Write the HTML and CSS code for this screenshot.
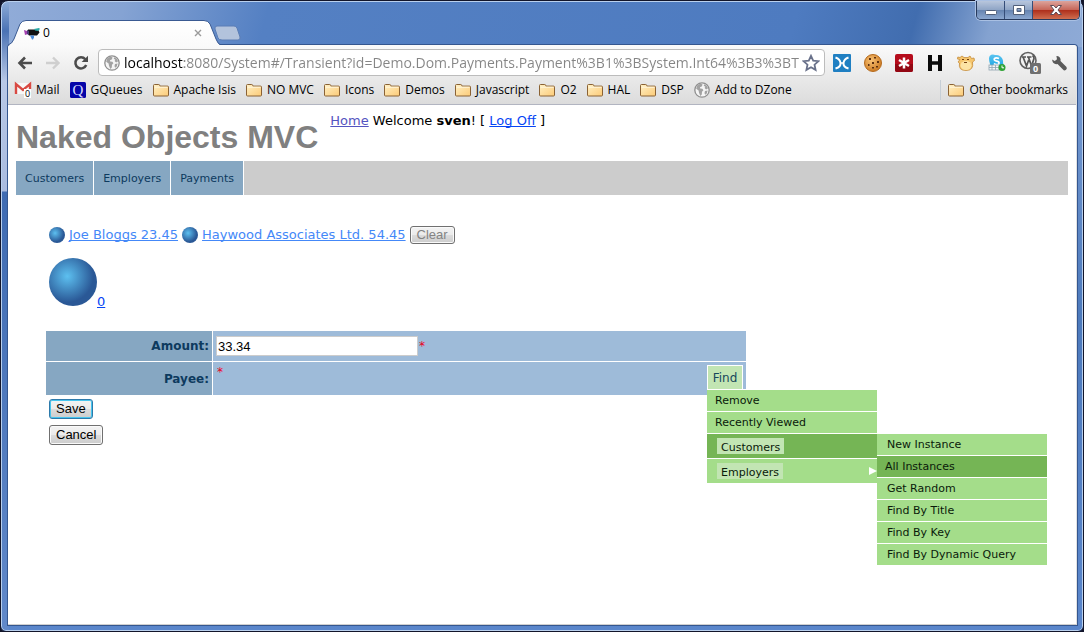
FILE: index.html
```html
<!DOCTYPE html>
<html lang="en">
<head>
<meta charset="utf-8">
<title>Naked Objects MVC</title>
<link rel="stylesheet" href="styles.css">
</head>
<body>
<svg class="defs" aria-hidden="true">
  <defs>
    <linearGradient id="folder-fill" x1="0" y1="0" x2="1" y2="1"><stop offset="0" stop-color="#fff0c4"/><stop offset="1" stop-color="#fccb78"/></linearGradient>
    <linearGradient id="tab-fill" x1="0" y1="0" x2="0" y2="1"><stop offset="0" stop-color="#ffffff"/><stop offset="1" stop-color="#fafafa"/></linearGradient>
    <linearGradient id="sky" x1="0" y1="0" x2="0" y2="1"><stop offset="0" stop-color="#5cc4f0"/><stop offset="1" stop-color="#0d9ee0"/></linearGradient>
    <radialGradient id="cookie" cx=".4" cy=".35" r=".7"><stop offset="0" stop-color="#f9c274"/><stop offset="1" stop-color="#c9771f"/></radialGradient>
    <symbol id="folder" viewBox="0 0 16 16">
      <path d="M.5 13V3.500q0-1 1-1h4.200q.8 0 1 .8l.2.8h7.600q1 0 1 1V13q0 1-1 1h-13q-1 0-1-1z" fill="url(#folder-fill)" stroke="#8a6234"/>
      <path d="M1.500 5.200h13" stroke="#fff7df"/>
    </symbol>
    <symbol id="globe" viewBox="0 0 16 16">
      <circle cx="8" cy="8" r="7.200" fill="#f5f5f5" stroke="#8f8f8f" stroke-width="1.300"/>
      <path d="M3 3.500l3-1.800 2.500.6-.5 1.900-2 1 .2 1.300 2.200.2 1 1.600-1.400 1.500-.2 2.700-1.500 1.400-1.300-3.200-.4-2.300-2.400-1.700zM10 2.200l2.600 1.400 1.500 2.600-2 1.200-1.500-1.400.7-1.300-1.500-.9zM11 9l2.600-.4-.8 2.800-1.700 1.300-.6-1.600z" fill="#a2a2a2"/>
    </symbol>
  </defs>
</svg>

<div class="window">
  <header class="titlebar">
    <div class="tabs">
      <div class="tab">
        <svg class="tab-shape" viewBox="0 0 212 25" aria-hidden="true"><path d="M0 25Q4 24 6 19L12 4Q14 .5 18 .5H196Q200 .5 202 4L208 19Q210 24 212 25z" fill="url(#tab-fill)"/><path d="M0 25Q4 24 6 19L12 4Q14 .5 18 .5H196Q200 .5 202 4L208 19Q210 24 212 24.500" fill="none" stroke="#3a5a92"/></svg>
        <svg class="icon" viewBox="0 0 16 16" aria-hidden="true"><path d="M4 4.500h10l1.500 3-2.500 3H5L3 8z" fill="#111"/><path d="M0 5l3 1 1 3-3 1z" fill="#a23fae"/><path d="M3 5l2 1v4l-2-1z" fill="#4b3a78"/><path d="M10 4l5-1 1 1-2 2-3-.5z" fill="#28a7a4"/><path d="M6 10.500h4v2l-1 2H8l-1-2z" fill="#4b8bd8"/></svg>
        <span class="tab-title">0</span>
        <button class="plain" type="button" aria-label="Close tab"><svg class="tab-x" viewBox="0 0 8 8"><path d="M1 1l6 6M7 1L1 7" stroke="#9a9a9a" stroke-width="1.400"/></svg></button>
      </div>
      <button class="plain" type="button" aria-label="New tab"><svg class="new-tab" viewBox="0 0 27 16"><path d="M3 1h17q2 0 3 2l3 9q.6 3-2 3H8q-3 0-4-2L1 4Q.4 1 3 1z" fill="#b3c3dc" stroke="#5b7db5"/></svg></button>
    </div>
    <div class="controls">
      <button class="control" type="button" aria-label="Minimize"><svg viewBox="0 0 12 10"><rect x=".5" y="5.500" width="11" height="4" rx="1" fill="#fff" stroke="#52607a"/></svg></button>
      <button class="control" type="button" aria-label="Maximize"><svg viewBox="0 0 12 10"><path d="M.5.5h11v9H.5zM4 3.500v3h4v-3z" fill="#fff" fill-rule="evenodd" stroke="#52607a"/></svg></button>
      <button class="control close" type="button" aria-label="Close"><svg viewBox="0 0 12 10"><path d="M.5.5h3.300L6 3 8.200.5h3.300L8 5l3.500 4.500H8.200L6 7 3.800 9.500H.5L4 5z" fill="#fff" stroke="#5c4a55"/></svg></button>
    </div>
  </header>

  <div class="client">
    <div class="chrome">
      <div class="toolbar">
        <div class="nav">
          <button class="plain" type="button" aria-label="Back"><svg class="icon" viewBox="0 0 16 16"><path d="M15 8H3M8 2.500L2.500 8 8 13.500" fill="none" stroke="#4c4c4c" stroke-width="2.600"/></svg></button>
          <button class="plain" type="button" aria-label="Forward"><svg class="icon" viewBox="0 0 16 16"><path d="M1 8h12M8 2.500L13.500 8 8 13.500" fill="none" stroke="#cfcfcf" stroke-width="2.400"/></svg></button>
          <button class="plain" type="button" aria-label="Reload"><svg class="icon" viewBox="0 0 16 16"><path d="M12.300 4.200A5.600 5.600 0 1 0 13.200 10" fill="none" stroke="#4c4c4c" stroke-width="2.500"/><path d="M15 .8V7H8.600z" fill="#4c4c4c"/></svg></button>
        </div>
        <div class="omnibox">
          <svg class="icon" aria-hidden="true"><use href="#globe"/></svg>
          <input class="url" type="text" aria-label="Address" value="localhost:8080/System#/Transient?id=Demo.Dom.Payments.Payment%3B1%3BSystem.Int64%3B3%3BTransient">
          <button class="plain" type="button" aria-label="Bookmark this page"><svg class="star" viewBox="0 0 18 18"><path d="M9 1.800l2.200 4.800 5.200.6-3.900 3.500 1.100 5.200L9 13.300l-4.600 2.600 1.100-5.200L1.600 7.200l5.200-.6z" fill="#fff" stroke="#69718a" stroke-width="1.800"/></svg></button>
        </div>
        <div class="extensions">
          <button class="plain" type="button" aria-label="Xmarks"><svg class="ext" viewBox="0 0 18 18"><rect width="18" height="18" rx="1" fill="#1f7fc2"/><path d="M2.500 3.500Q7 5 7.500 9T2.500 14.500M15.500 3.500Q11 5 10.500 9t5 5.500" fill="none" stroke="#fff" stroke-width="2"/><path d="M7 9h4" stroke="#fff" stroke-width="1.500"/></svg></button>
          <button class="plain" type="button" aria-label="Cookies"><svg class="ext" viewBox="0 0 18 18"><circle cx="9" cy="9" r="8.500" fill="url(#cookie)" stroke="#b56a1d"/><path d="M5 4h2v2H5zM10 3h2v1.500h-2zM13 7h2v2h-2zM8 8h2v2H8zM4 10h1.500v2H4zM8 13h2v1.500H8zM12 12h2v1.500h-2z" fill="#5d3010"/></svg></button>
          <button class="plain" type="button" aria-label="LastPass"><svg class="ext" viewBox="0 0 18 18"><rect width="18" height="18" rx="2" fill="#b50c1c"/><path d="M0 10h18v6q0 2-2 2H2q-2 0-2-2z" fill="#930713"/><path d="M9 3.500v11M4 6l10 6M14 6L4 12" stroke="#fff" stroke-width="2.500"/></svg></button>
          <button class="plain" type="button" aria-label="H"><svg class="ext" viewBox="0 0 18 18"><path d="M2 1h4v6.200h6V1h4v16h-4v-6.200H6V17H2z" fill="#0b0b0b"/></svg></button>
          <button class="plain" type="button" aria-label="Hamster"><svg class="ext" viewBox="0 0 18 18"><path d="M3 5.500L.5 5l.3-2L3 3.500 5 2l2 1.500h4L13 2l1.500 2.500 2.500-.5.500 2.500L15.500 8q1.500 8.500-6.500 8.500T2.500 9L1 8z" fill="#f5c56d" stroke="#c58d3b" stroke-width=".8"/><ellipse cx="9" cy="11.500" rx="5.500" ry="4.500" fill="#fce3a4"/><path d="M5 5h2v1H5zM10 5h2v1h-2zM7 8h3v1H7z" fill="#74410f"/></svg></button>
          <button class="plain" type="button" aria-label="Skype"><svg class="ext" viewBox="0 0 18 18"><path d="M1 4a4 4 0 0 1 6-3 7 7 0 0 1 8 8q1 2 0 4l-3 3H8Q3 16 2 10 1 7 1 4z" fill="url(#sky)"/><path d="M11 4.500Q8 3 6.400 4.600q-.8 2 2.400 2.500 3 .7 2 2.700Q9 11.500 5.800 9.800" fill="none" stroke="#fff" stroke-width="1.700"/><rect x="1" y="11" width="10" height="5" fill="#f3f6f8" stroke="#8fa4b0" stroke-width=".8"/><path d="M4 11v5M7.500 11v5M1 13.500h10" stroke="#8fa4b0" stroke-width=".8"/><circle cx="14" cy="13.500" r="3.500" fill="#2fa336"/><path d="M14 11.500v2.300h2" fill="none" stroke="#fff"/></svg></button>
          <button class="plain" type="button" aria-label="WordPress"><svg class="wordpress" viewBox="0 0 22 23"><circle cx="9" cy="9.500" r="8" fill="#f2f2f2" stroke="#616161" stroke-width="1.600"/><path d="M3 6h4M8 6h4.500M4.200 6.300L7.500 15l2.200-6M9.500 6.300l3 8.700L15 7.500q0-2-1.500-3" fill="none" stroke="#555" stroke-width="1.700"/><rect x="11" y="12" width="11" height="11" rx="1.500" fill="#707070"/><text x="16.500" y="21" class="badge-light">0</text></svg></button>
          <button class="plain" type="button" aria-label="Settings"><svg class="icon" viewBox="0 0 16 16"><path d="M1 4.500L3.800 6 6 4.200 5.400 1Q9 .8 9.600 4.600L9.500 6l6 6q1 2-.7 3t-2.600-.3L6.500 9Q2 10 1 4.500z" fill="#5b5b5b"/></svg></button>
        </div>
      </div>
      <nav class="bookmarks" aria-label="Bookmarks">
        <a class="bookmark" href="#"><svg class="icon" viewBox="0 0 16 16"><path d="M0 1h16v11H0z" fill="#f8f8f8"/><path d="M1 12V2l7 6 7-6v5" fill="none" stroke="#d94a43" stroke-width="2.400"/><rect x="9" y="7" width="7" height="9" fill="#fff"/><text x="12.500" y="15" class="badge-dark">0</text></svg>Mail</a>
        <a class="bookmark" href="#"><svg class="icon" viewBox="0 0 16 16"><rect width="16" height="16" rx="1.500" fill="#0505a8"/><text x="8" y="13" class="q-mark">Q</text></svg>GQueues</a>
        <a class="bookmark" href="#"><svg class="icon"><use href="#folder"/></svg>Apache Isis</a>
        <a class="bookmark" href="#"><svg class="icon"><use href="#folder"/></svg>NO MVC</a>
        <a class="bookmark" href="#"><svg class="icon"><use href="#folder"/></svg>Icons</a>
        <a class="bookmark" href="#"><svg class="icon"><use href="#folder"/></svg>Demos</a>
        <a class="bookmark" href="#"><svg class="icon"><use href="#folder"/></svg>Javascript</a>
        <a class="bookmark" href="#"><svg class="icon"><use href="#folder"/></svg>O2</a>
        <a class="bookmark" href="#"><svg class="icon"><use href="#folder"/></svg>HAL</a>
        <a class="bookmark" href="#"><svg class="icon"><use href="#folder"/></svg>DSP</a>
        <a class="bookmark" href="#"><svg class="icon"><use href="#globe"/></svg>Add to DZone</a>
        <a class="bookmark other" href="#"><svg class="icon"><use href="#folder"/></svg>Other bookmarks</a>
      </nav>
    </div>

    <main class="page">
      <div class="masthead">
        <h1 class="brand">Naked Objects MVC</h1>
        <p class="login"><a class="visited" href="#">Home</a> Welcome <b>sven</b>! [ <a href="#">Log Off</a> ]</p>
      </div>
      <nav class="services" aria-label="Services">
        <button class="service" type="button">Customers</button>
        <button class="service" type="button">Employers</button>
        <button class="service" type="button">Payments</button>
      </nav>

      <div class="history">
        <span class="ball"></span><a href="#">Joe Bloggs 23.45</a>
        <span class="ball"></span><a href="#">Haywood Associates Ltd. 54.45</a>
        <button class="push faded" type="button">Clear</button>
      </div>
      <div class="object"><span class="ball large"></span><a href="#">0</a></div>

      <form class="edit">
        <div class="properties">
          <div class="property">
            <label class="name" for="amount">Amount:</label>
            <div class="value"><input class="field" id="amount" type="text" value="33.34"><span class="required">*</span></div>
          </div>
          <div class="property">
            <span class="name">Payee:</span>
            <div class="value payee"><span class="required">*</span>
              <div class="finder">
                <button class="find" type="button">Find</button>
                <div class="menu">
                  <button class="item" type="button">Remove</button>
                  <button class="item" type="button">Recently Viewed</button>
                  <div class="parent">
                    <button class="item tall active" type="button"><span class="chip">Customers</span></button>
                    <div class="menu submenu">
                      <button class="item" type="button">New Instance</button>
                      <button class="item active" type="button">All Instances</button>
                      <button class="item" type="button">Get Random</button>
                      <button class="item" type="button">Find By Title</button>
                      <button class="item" type="button">Find By Key</button>
                      <button class="item" type="button">Find By Dynamic Query</button>
                    </div>
                  </div>
                  <button class="item tall" type="button"><span class="chip">Employers</span><svg class="arrow" viewBox="0 0 8 8"><path d="M0 0l8 4-8 4z" fill="#fff"/></svg></button>
                </div>
              </div>
            </div>
          </div>
        </div>
        <div class="actions">
          <button class="push default" type="button">Save</button>
          <button class="push" type="button">Cancel</button>
        </div>
      </form>
    </main>
  </div>
</div>
</body>
</html>
```
FILE: styles.css
```css
* { box-sizing: border-box; }

body {
  margin: 0;
  background: #12152a;
  font: 13px/16px "DejaVu Sans", Verdana, sans-serif;
  color: #000;
}

button { font: inherit; color: inherit; cursor: pointer; }
a { color: #0645f5; text-decoration-skip-ink: none; }
svg { display: block; flex: none; }

.defs { position: absolute; width: 0; height: 0; }
.plain { display: block; padding: 0; border: 0; background: none; }
.icon { width: 16px; height: 16px; overflow: visible; }

/* Window frame */
.window {
  display: flex;
  flex-direction: column;
  min-height: 100vh;
  padding: 0 5px 6px;
  border: 1px solid #12152a;
  border-radius: 8px 8px 6px 6px;
  box-shadow: inset 0 0 0 1px #b9d0ee;
  background:
    linear-gradient(#8fadd9, #4a72b4 30px, #b8c8e6 80px, #a9bbdf 190px, #3f6bb2 191px, #6189ca) left / 8px 100% no-repeat,
    linear-gradient(105deg, #91acd8 0, #85a3d3 120px, #5480c3 260px, #4e7bc0 73%, #416daf 84%, #84a2d0 91%, #8eaad6) top / 100% 46px no-repeat,
    linear-gradient(#83a4d7, #4d7abc 50%, #5a86cb);
}

.titlebar { display: flex; justify-content: space-between; align-items: flex-start; height: 44px; }
.tabs { display: flex; align-items: flex-start; padding: 19px 0 0 2px; }
.tab { position: relative; display: flex; align-items: center; width: 206px; height: 25px; padding: 0 12px 0 16px; }
.tab > * { position: relative; }
.tab .tab-shape { position: absolute; left: 0; top: 0; width: 212px; height: 25px; }
.tab-title { flex: 1; padding-left: 3px; font: 12px/16px "Open Sans", sans-serif; }
.tab-x { width: 8px; height: 8px; }
.tabs > .plain { padding-top: 5px; }
.new-tab { width: 27px; height: 16px; }

.controls { display: flex; margin-right: -2px; border: 1px solid #26395c; border-top: 0; border-radius: 0 0 5px 5px; overflow: hidden; box-shadow: 0 0 0 1px #a9c0e3; }
.control {
  display: grid; place-items: center;
  width: 28px; height: 18px; padding: 0;
  border: 0; border-right: 1px solid #354d78;
  background: linear-gradient(#b8c6dc, #8fa5c6 48%, #6583b0 50%, #8ba7cf);
}
.control svg { width: 12px; height: 10px; }
.control.close { width: 46px; border-right: 0; background: linear-gradient(#dca49c, #c7675a 48%, #ad2d1a 50%, #cf6e50); }

.client {
  flex: 1;
  display: flex;
  flex-direction: column;
  margin: 0 1px 0 2px;
  border-bottom: 1px solid #d0d0d0;
  border-right: 1px solid #e2e2e2;
  border-radius: 3px 3px 0 0;
  background: #fff;
  box-shadow: 0 0 0 1px #34568f;
}

/* Browser toolbar */
.chrome { border-radius: 3px 3px 0 0; border-bottom: 1px solid #b2b5c1; background: linear-gradient(#fafafa, #dcdcdc); }
.toolbar { display: flex; align-items: center; gap: 8px; padding: 4px 9px 3px 9px; }
.nav { display: flex; gap: 12px; width: 73px; }
.omnibox { flex: 1; display: flex; align-items: center; min-width: 0; height: 27px; padding: 0 4px 0 5px; border: 1px solid #bcbcbc; border-radius: 4px; background: #fff; }
.url {
  flex: 1; min-width: 0; height: 25px;
  margin: 0 3px 0 4px; padding: 0; border: 0; outline: 0;
  font: 14px/25px "Open Sans", sans-serif;
  color: transparent;
  background: linear-gradient(90deg, #000 60px, #858585 60px);
  -webkit-background-clip: text;
  background-clip: text;
}
.star { width: 18px; height: 18px; }
.extensions { display: flex; align-items: center; gap: 13px; }
.ext { width: 18px; height: 18px; }
.wordpress { width: 22px; height: 23px; }
.extensions > :last-child { margin-left: -3px; }
.badge-light { font: bold 9px "Open Sans", sans-serif; fill: #fff; text-anchor: middle; }
.badge-dark { font: 9px "Open Sans", sans-serif; fill: #000; text-anchor: middle; }
.q-mark { font: 15px "Liberation Serif", serif; fill: #d5dcff; text-anchor: middle; }

.bookmarks { display: flex; align-items: center; gap: 10px; height: 25px; padding: 0 8px 3px 7px; }
.bookmark { display: flex; align-items: center; gap: 5px; white-space: nowrap; font: 12px/20px "Open Sans", sans-serif; color: #000; text-decoration: none; }
.bookmark.other { margin-left: auto; padding-left: 7px; border-left: 1px solid #c6ced6; }

/* Application page */
.page { padding: 5px 8px 0; }
.masthead { display: flex; gap: 12px; height: 51px; }
.brand { margin: 0; font: bold 32px/54px "Liberation Sans", Arial, sans-serif; color: #808080; white-space: nowrap; }
.login { margin: 3px 0 0; }
.login .visited { color: #5454c0; }

.services { display: flex; gap: 1px; background: #ccc; }
.service { height: 34px; padding: 1px 9px 0; border: 0; background: #86a7c2; box-shadow: 1px 0 #fff; font-size: 11px; color: #0d3a5e; }

.history { display: flex; align-items: center; gap: 4px; padding: 31px 33px 0; }
.history a { color: #4488f8; }
.ball { flex: none; width: 16px; height: 16px; border-radius: 50%; background: radial-gradient(circle at 38% 38%, #5dc0f0, #2a5896 62%); }
.ball.large { width: 48px; height: 48px; }
.object { display: flex; align-items: flex-end; padding: 14px 33px 0; }
.object a { line-height: 9px; }

.push {
  height: 20px; padding: 0 6px;
  border: 1px solid #707070; border-radius: 3px;
  background: linear-gradient(#f3f3f3, #ebebeb 50%, #dcdcdc 50%, #cdcdcd);
  box-shadow: inset 0 0 0 1px #fafafa;
  font: 13px/16px "Liberation Sans", Arial, sans-serif;
}
.push.default { border-color: #2c7aab; box-shadow: inset 0 0 0 1px #48c5ee; }
.push.faded { height: 18px; color: #838383; }

.edit { padding: 25px 30px 0; }
.properties { display: grid; gap: 1px; max-width: 700px; }
.property { display: grid; grid-template-columns: 166px 1fr; gap: 1px; min-height: 30px; }
.name { display: flex; align-items: center; justify-content: flex-end; padding-right: 3px; background: #86a7c2; font-weight: bold; font-size: 12px; color: #0d3a5e; }
.value { display: flex; align-items: center; padding: 0 3px; background: #9ebbd9; color: #e8001c; }
.field { width: 202px; height: 20px; padding: 0 1px; border: 1px solid #ccc; background: #fff; font: 13px/16px "Liberation Sans", Arial, sans-serif; color: #000; }
.required { padding-left: 1px; font-size: 12px; line-height: 12px; }
.payee { position: relative; align-items: flex-start; height: 33px; padding-top: 4px; }

.finder { position: absolute; top: 3px; right: 3px; }
.find { display: block; width: 36px; height: 25px; padding: 0; border: 1px solid #fff; border-bottom: 0; background: #c2e5b3; color: #17475c; font-size: 12px; }
.menu { position: absolute; top: 24px; left: 0; width: 170px; border-top: 1px solid #fff; display: grid; gap: 1px; background: #fff; }
.parent { position: relative; }
.submenu { top: 0; left: 100%; border-top: 0; }
.item { display: flex; align-items: center; width: 100%; height: 21px; padding: 1px 8px 0; border: 0; background: #a4dd8a; font-size: 11px; color: #0a1a0a; }
.submenu .item { padding-left: 10px; }
.submenu .active { padding-left: 8px; }
.item.active { background: #75b555; }
.item.tall { height: 24px; padding: 0 0 0 10px; justify-content: space-between; }
.chip { height: 16px; padding: 3px 4px 0; line-height: 14px; background: #c2e5b3; }
.arrow { width: 8px; height: 8px; }

.actions { display: grid; justify-items: start; gap: 6px; padding: 4px 3px; }
```
